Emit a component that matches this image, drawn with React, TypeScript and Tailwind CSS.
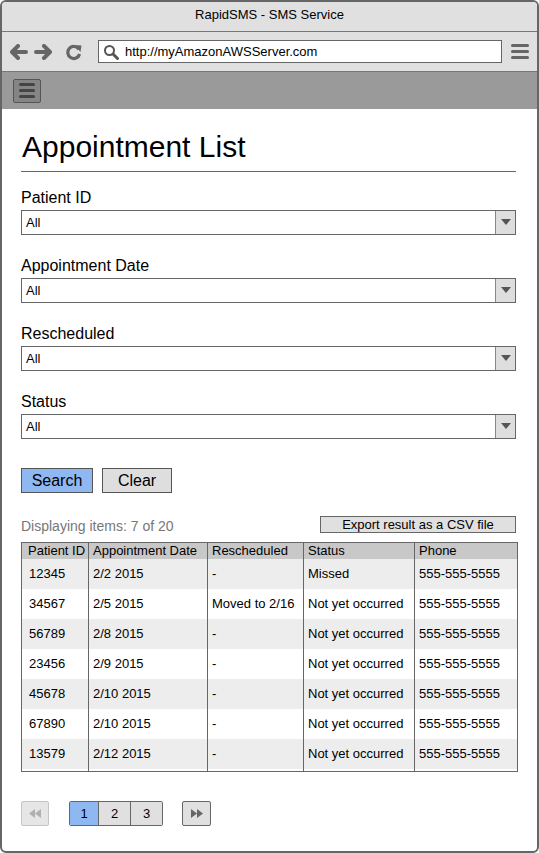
import React from 'react';

const font = { fontFamily: '"Liberation Sans", Arial, sans-serif' };

const filters = ['Patient ID', 'Appointment Date', 'Rescheduled', 'Status'];

const rows = [
  ['12345', '2/2 2015', '-', 'Missed', '555-555-5555'],
  ['34567', '2/5 2015', 'Moved to 2/16', 'Not yet occurred', '555-555-5555'],
  ['56789', '2/8 2015', '-', 'Not yet occurred', '555-555-5555'],
  ['23456', '2/9 2015', '-', 'Not yet occurred', '555-555-5555'],
  ['45678', '2/10 2015', '-', 'Not yet occurred', '555-555-5555'],
  ['67890', '2/10 2015', '-', 'Not yet occurred', '555-555-5555'],
  ['13579', '2/12 2015', '-', 'Not yet occurred', '555-555-5555'],
];

const headers = ['Patient ID', 'Appointment Date', 'Rescheduled', 'Status', 'Phone'];
const colWidths = ['w-[67px]', 'w-[119px]', 'w-[96px]', 'w-[111px]', 'w-[103px]'];

function Arrow({ flip }: { flip?: boolean }) {
  return (
    <svg width="18" height="16" viewBox="0 0 18 16" className={flip ? 'scale-x-[-1]' : ''}>
      <path d="M8 2 L2 8 L8 14 M2.5 8 H16" fill="none" stroke="#666" strokeWidth="4" strokeLinecap="round" strokeLinejoin="round" />
    </svg>
  );
}

function SelectBox() {
  return (
    <div className="flex h-[25px] w-full border border-[#666] bg-white">
      <div className="flex flex-1 items-center pl-[4px] text-[13px] text-black">All</div>
      <div className="flex w-[20px] items-center justify-center border-l border-[#888] bg-[#dedede]">
        <svg width="10" height="7" viewBox="0 0 10 7">
          <path d="M0 0 H10 L5 6 Z" fill="#555" />
        </svg>
      </div>
    </div>
  );
}

function Skip({ back, color }: { back?: boolean; color: string }) {
  return (
    <svg width="12" height="9" viewBox="0 0 12 9" className={back ? 'scale-x-[-1]' : ''}>
      <path d="M0 0 L6 4.5 L0 9 Z M6 0 L12 4.5 L6 9 Z" fill={color} />
    </svg>
  );
}

export default function App() {
  return (
    <div className="h-[853px] w-[539px] bg-white" style={font}>
      <div className="flex h-full w-full flex-col overflow-hidden rounded-[6px] border-2 border-[#666]">
        {/* title bar */}
        <div className="flex h-[30px] items-center justify-center border-b border-[#777] bg-[#e0e0e0] pb-[3px] text-[13px] text-black">
          RapidSMS - SMS Service
        </div>

        {/* browser toolbar */}
        <div className="flex h-[40px] items-center border-b border-[#777] bg-[#e0e0e0] pl-[8px] pr-[6px]">
          <div className="flex items-center gap-[6px]">
            <Arrow />
            <Arrow flip />
          </div>
          <svg width="18" height="18" viewBox="0 0 18 18" className="ml-[13px]">
            <path d="M14 6.5 A6 6 0 1 0 14.6 11" fill="none" stroke="#666" strokeWidth="3.2" />
            <path d="M10 2 L16.5 2.5 L15.5 9 Z" fill="#666" />
          </svg>
          <div className="ml-[15px] flex h-[23px] w-[404px] items-center border border-[#666] bg-white pl-[4px]">
            <svg width="16" height="16" viewBox="0 0 16 16">
              <circle cx="6.5" cy="6.5" r="4.5" fill="none" stroke="#555" strokeWidth="2" />
              <path d="M10 10 L14.5 14.5" stroke="#555" strokeWidth="3" strokeLinecap="round" />
            </svg>
            <span className="ml-[6px] text-[13px] text-black">http://myAmazonAWSServer.com</span>
          </div>
          <div className="ml-[9px] flex flex-col gap-[3px]">
            <div className="h-[3px] w-[18px] rounded-sm bg-[#666]" />
            <div className="h-[3px] w-[18px] rounded-sm bg-[#666]" />
            <div className="h-[3px] w-[18px] rounded-sm bg-[#666]" />
          </div>
        </div>

        {/* app bar */}
        <div className="flex h-[37px] items-center bg-[#9a9a9a] pl-[11px]">
          <div className="flex h-[24px] w-[28px] flex-col items-center justify-center gap-[3px] rounded-[2px] border border-[#555] bg-[#858585]">
            <div className="h-[3px] w-[16px] rounded-sm bg-[#444]" />
            <div className="h-[3px] w-[16px] rounded-sm bg-[#444]" />
            <div className="h-[3px] w-[16px] rounded-sm bg-[#444]" />
          </div>
        </div>

        {/* content */}
        <div className="flex flex-1 flex-col pl-[19px] pr-[21px]">
          <h1 className="mt-[20px] border-b border-[#666] pb-[6px] pl-[1px] text-[30px] leading-[36px] text-black">
            Appointment List
          </h1>

          <div className="mt-[16px] flex flex-col gap-[21px]">
            {filters.map((f) => (
              <div key={f} className="flex flex-col gap-[2px]">
                <div className="text-[16px] leading-[20px] text-black">{f}</div>
                <SelectBox />
              </div>
            ))}
          </div>

          <div className="mt-[29px] flex gap-[9px]">
            <button className="h-[25px] w-[72px] border border-[#555] bg-[#8fb8f2] text-[16px] text-black">Search</button>
            <button className="h-[25px] w-[70px] border border-[#555] bg-[#dedede] text-[16px] text-black">Clear</button>
          </div>

          <div className="mt-[23px] flex h-[17px] items-center justify-between">
            <span className="mt-[3px] text-[14px] leading-[17px] text-[#777]">Displaying items: 7 of 20</span>
            <button className="h-[17px] w-[196px] border border-[#666] bg-[#e0e0e0] text-[13px] leading-[15px] text-black">
              Export result as a CSV file
            </button>
          </div>

          <table className="mt-[9px] w-[496px] table-fixed border-collapse border border-[#666] text-[13px] text-black">
            <thead>
              <tr className="h-[16px] bg-[#c8c8c8]">
                {headers.map((h, i) => (
                  <th
                    key={h}
                    className={`${colWidths[i]} border-x border-[#666] p-0 text-left font-normal leading-[15px] ${i === 0 ? 'pl-[6px]' : 'pl-[4px]'}`}
                  >
                    {h}
                  </th>
                ))}
              </tr>
            </thead>
            <tbody>
              {rows.map((r, ri) => (
                <tr key={ri} className={`h-[30px] ${ri % 2 === 0 ? 'bg-[#ededed]' : 'bg-white'}`}>
                  {r.map((c, ci) => (
                    <td key={ci} className={`border-x border-[#666] p-0 ${ci === 0 ? 'pl-[7px]' : 'pl-[4px]'}`}>
                      {c}
                    </td>
                  ))}
                </tr>
              ))}
              <tr className="h-[3px] bg-white">
                {headers.map((h) => (
                  <td key={h} className="border-x border-[#666] p-0" />
                ))}
              </tr>
            </tbody>
          </table>

          <div className="mt-[29px] flex items-center text-[13px] text-black">
            <div className="flex h-[25px] w-[28px] items-center justify-center rounded-[2px] border border-[#c4c4c4] bg-[#e6e6e6]">
              <Skip back color="#b0b0b0" />
            </div>
            <div className="ml-[20px] flex h-[25px] overflow-hidden rounded-[2px] border border-[#666]">
              <div className="flex w-[28px] items-center justify-center bg-[#8fb8f2]">1</div>
              <div className="flex w-[32px] items-center justify-center border-l border-[#666] bg-[#e0e0e0]">2</div>
              <div className="flex w-[32px] items-center justify-center border-l border-[#666] bg-[#e0e0e0]">3</div>
            </div>
            <div className="ml-[19px] flex h-[25px] w-[29px] items-center justify-center rounded-[2px] border border-[#666] bg-[#e0e0e0]">
              <Skip color="#666" />
            </div>
          </div>
        </div>
      </div>
    </div>
  );
}
